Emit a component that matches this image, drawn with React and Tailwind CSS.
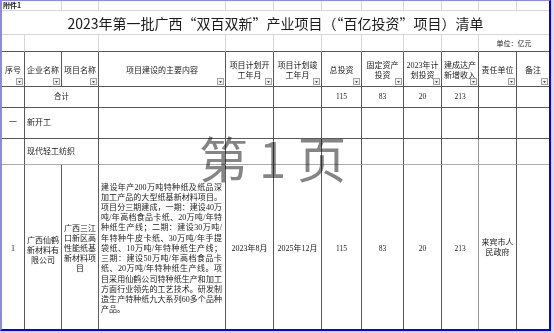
const serif = "font-['Liberation_Serif','Noto_Sans_CJK_SC',serif]";
const sans = "font-['Noto_Sans_CJK_SC','Liberation_Sans',sans-serif]";

const heads = [
  ["序号"],
  ["企业名称"],
  ["项目名称"],
  ["项目建设的主要内容"],
  ["项目计划开", "工年月"],
  ["项目计划竣", "工年月"],
  ["总投资"],
  ["固定资产", "投资"],
  ["2023年计", "划投资"],
  ["建成达产", "新增收入"],
  ["责任单位"],
  ["备注"],
];

const desc = [
  "建设年产200万吨特种纸及纸品深",
  "加工产品的大型纸基新材料项目。",
  "项目分三期建成，一期：建设40万",
  "吨/年高档食品卡纸、20万吨/年特",
  "种纸生产线；二期：建设30万吨/",
  "年特种牛皮卡纸、30万吨/年手提",
  "袋纸、10万吨/年特种纸生产线；",
  "三期：建设50万吨/年高档食品卡",
  "纸、20万吨/年特种纸生产线。项",
  "目采用仙鹤公司特种纸生产和加工",
  "方面行业领先的工艺技术。研发制",
  "造生产特种纸九大系列60多个品种",
];

// excel gridline vs printed cell border
const grid = "border-r border-b border-[#d6d6d6]";
const line = "border-r border-b border-[#585858]";

function Filter() {
  return (
    <span className="absolute right-[1px] bottom-[1px] flex h-[7px] w-[7px] items-center justify-center border border-[#a2a2a2] bg-[#f3f3f3]">
      <svg width="3" height="2" viewBox="0 0 3 2">
        <path d="M0 0h3L1.5 2z" fill="#454545" />
      </svg>
    </span>
  );
}

function Cell({ children, className = "" }) {
  return (
    <div className={`flex items-center justify-center ${line} ${className}`}>
      {children}
    </div>
  );
}

export default function App() {
  return (
    <div lang="zh-CN" className="relative h-[333px] w-[554px] overflow-hidden bg-[#dedee9]">
      <div className="w-[551px] border-t border-l-2 border-r-2 border-b-2 border-t-[#8c8cd4] border-l-[#8c8cd4] border-r-[#0000ff] border-b-[#0000ff] bg-white text-[#1a1a1a]">
        <div
          className={`grid grid-cols-[23px_37px_37px_127px_48px_48px_40px_42px_38px_37px_38px_32px] grid-rows-[10px_24px_17px_35px_21px_31px_26px_164px] ${serif}`}
        >
          {/* row: 附件1 */}
          <div className={`col-span-2 flex items-center pl-[1px] text-[7px] leading-none font-bold ${sans} ${grid}`}>
            附件1
          </div>
          {Array.from({ length: 10 }).map((_, i) => (
            <div key={i} className={i === 9 ? "border-b border-[#d6d6d6]" : grid} />
          ))}

          {/* title */}
          <div className={`col-span-12 flex items-center justify-center border-b border-[#d6d6d6] text-[14px] leading-none ${sans}`}>
            2023年第一批广西“双百双新”产业项目（“百亿投资”项目）清单
          </div>

          {/* unit row */}
          <div className="border-r border-b border-r-[#d6d6d6] border-b-[#585858]" />
          <div className="col-span-2 border-r border-b border-r-[#d6d6d6] border-b-[#585858]" />
          {Array.from({ length: 7 }).map((_, i) => (
            <div key={i} className="border-r border-b border-r-[#d6d6d6] border-b-[#585858]" />
          ))}
          <div className={`col-span-2 flex items-center justify-center border-b border-[#585858] text-[7px] leading-none ${sans}`}>
            单位：亿元
          </div>

          {/* header */}
          {heads.map((h, i) => (
            <div
              key={i}
              className={`relative flex flex-col items-center justify-center pt-[3px] text-[8px] leading-[10px] ${
                i === 11 ? "border-b border-[#585858]" : line
              }`}
            >
              {h.map((t) => (
                <span key={t}>{t}</span>
              ))}
              <Filter />
            </div>
          ))}

          {/* 合计 */}
          <Cell />
          <Cell className="col-span-2 text-[7.5px]">合计</Cell>
          <Cell />
          <Cell />
          <Cell />
          <Cell className="text-[7.5px]">115</Cell>
          <Cell className="text-[7.5px]">83</Cell>
          <Cell className="text-[7.5px]">20</Cell>
          <Cell className="text-[7.5px]">213</Cell>
          <Cell />
          <Cell className="border-r-0" />

          {/* 一 新开工 */}
          <Cell className="text-[8px]">一</Cell>
          <div className={`col-span-2 flex items-center pl-[2px] text-[8px] ${line}`}>新开工</div>
          {Array.from({ length: 9 }).map((_, i) => (
            <Cell key={i} className={i === 8 ? "border-r-0" : ""} />
          ))}

          {/* 现代轻工纺织 */}
          <div className="border-r border-b border-r-[#585858] border-b-[#ababab]" />
          <div className="col-span-2 flex items-center border-r border-b border-r-[#585858] border-b-[#ababab] pl-[2px] text-[8px]">
            现代轻工纺织
          </div>
          {Array.from({ length: 9 }).map((_, i) => (
            <div
              key={i}
              className={
                i === 8
                  ? "border-b border-[#ababab]"
                  : i === 6
                    ? "border-r border-b border-r-[#9a9a9a] border-b-[#ababab]"
                    : "border-r border-b border-r-[#585858] border-b-[#ababab]"
              }
            />
          ))}

          {/* data row */}
          <div className="flex items-center justify-center border-r border-[#585858] pt-[3px] text-[8px]">1</div>
          <div className="flex flex-col items-center justify-center border-r border-[#5e5e5e] pt-[8px] text-[8px] leading-[10px]">
            <span>广西仙鹤</span>
            <span>新材料有</span>
            <span>限公司</span>
          </div>
          <div className="flex flex-col items-center justify-center border-r border-[#5e5e5e] pt-[3px] text-[8px] leading-[10px]">
            <span>广西三江</span>
            <span>口新区高</span>
            <span>性能纸基</span>
            <span>新材料项</span>
            <span>目</span>
          </div>
          <div className="flex min-w-0 flex-col justify-center overflow-hidden border-r border-[#585858] pr-[3px] pl-[2px] pt-[4px] text-[8px] leading-[10.2px]">
            {desc.map((t) => (
              <div key={t} className="text-justify [text-align-last:justify]">
                {t}
              </div>
            ))}
            <div>产品。</div>
          </div>
          <Cell className="border-b-0 pt-[4px] text-[8px]">2023年8月</Cell>
          <Cell className="border-b-0 pt-[4px] text-[8px]">2025年12月</Cell>
          <Cell className="border-b-0 pt-[4px] text-[7.5px]">115</Cell>
          <Cell className="border-b-0 pt-[4px] text-[7.5px]">83</Cell>
          <Cell className="border-b-0 pt-[4px] text-[7.5px]">20</Cell>
          <div className="flex items-center justify-center border-r border-[#9a9a9a] pt-[4px] text-[7.5px]">213</div>
          <div className="flex flex-col items-center justify-center border-r border-[#585858] pt-[2px] text-[8px] leading-[10px]">
            <span>来宾市人</span>
            <span>民政府</span>
          </div>
          <div />
        </div>
      </div>

      {/* page watermark */}
      <div
        className={`pointer-events-none absolute left-[199px] top-[132px] whitespace-pre text-[49px] leading-none text-[#858585] mix-blend-multiply ${sans}`}
      >
        第 1 页
      </div>
    </div>
  );
}
